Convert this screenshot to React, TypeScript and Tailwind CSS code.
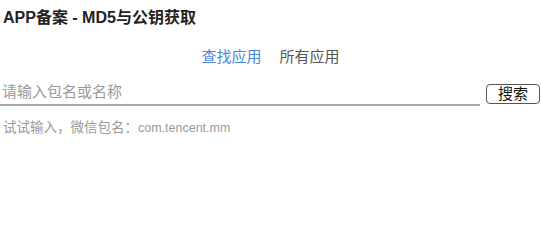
import { useState } from "react";

export default function App() {
  const [tab, setTab] = useState(0);
  const tabs = ["查找应用", "所有应用"];

  return (
    <div className="w-[541px] h-[211px] bg-white font-['Liberation_Sans','Noto_Sans_CJK_SC',sans-serif]">
      {/* Title */}
      <div className="h-[36px] flex items-center pl-[3px] text-[16px] font-bold text-[#222]">
        APP备案 - MD5与公钥获取
      </div>

      {/* Tabs */}
      <div className="h-[43px] flex items-center justify-center gap-[18px] text-[15px]">
        {tabs.map((t, i) => (
          <button
            key={t}
            onClick={() => setTab(i)}
            className={i === tab ? "text-[#4a86d4]" : "text-[#555]"}
          >
            {t}
          </button>
        ))}
      </div>

      {/* Search row */}
      <div className="flex items-start">
        <input
          className="w-[480px] h-[27px] pl-[2px] text-[15px] border-b-2 border-[#aaa] outline-none placeholder:text-[#9a9a9a]"
          placeholder="请输入包名或名称"
        />
        <button className="ml-[6px] mt-[5px] w-[54px] h-[20px] flex items-center justify-center border border-[#555] rounded-[4px] text-[15px] text-[#111] leading-none pb-[1px]">
          搜索
        </button>
      </div>

      {/* Hint */}
      <div className="mt-[12px] h-[20px] flex items-center pl-[3px] text-[13.5px] text-[#9a9a9a]">
        试试输入，微信包名：<span className="text-[12.5px]">com.tencent.mm</span>
      </div>
    </div>
  );
}
